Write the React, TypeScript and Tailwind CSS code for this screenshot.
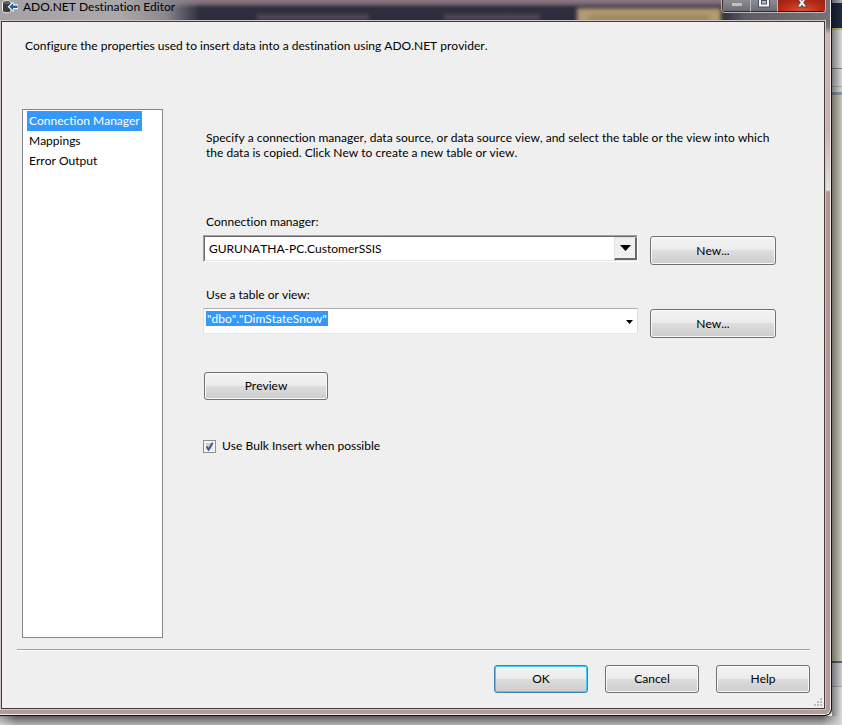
import { useState } from "react";
import type { ButtonHTMLAttributes } from "react";
import { clsx } from "clsx";

const pages = ["Connection Manager", "Mappings", "Error Output"];

interface DialogButtonProps extends ButtonHTMLAttributes<HTMLButtonElement> {
  isDefault?: boolean;
}

function DialogButton({
  isDefault,
  className,
  children,
  ...props
}: DialogButtonProps) {
  return (
    <button
      type="button"
      className={clsx(
        "shrink-0 rounded-[3px] border bg-[linear-gradient(to_bottom,#f3f3f3_0%,#ebebeb_50%,#dddddd_50%,#cdcdcd_100%)] text-center leading-4",
        isDefault
          ? "border-[#3c7fb1] shadow-[inset_0_0_0_1px_#46d0f5]"
          : "border-[#707070] shadow-[inset_0_0_0_1px_#f9f9f9]",
        className
      )}
      {...props}
    >
      {children}
    </button>
  );
}

function AppIcon() {
  return (
    <svg width="16" height="14" viewBox="0 0 16 14" aria-hidden="true">
      <path
        d="M0.5 3C0.5 1.5 2.3 0.8 4.8 0.8S9 1.5 9 3V10.5C9 12 7.2 12.8 4.8 12.8S0.5 12 0.5 10.5Z"
        fill="#3a3a3a"
        stroke="#f4f4f4"
      />
      <ellipse cx="4.8" cy="2.9" rx="3.4" ry="1.3" fill="#5c5c5c" />
      <path d="M5.5 6.8L11.5 1.5V4.3H16V9.3H11.5V12.2Z" fill="#f7f7f7" />
      <path d="M7.3 6.8L11 3.3V5.6H15.5V8H11V10.3Z" fill="#1464b4" />
    </svg>
  );
}

function WindowControls() {
  return (
    <div className="flex h-[13px] overflow-hidden rounded-b-[4px] border border-t-0 border-[#b9b8bc]">
      <button
        type="button"
        aria-label="Minimize"
        className="flex w-7 justify-center border-b border-l border-[#2c2c30] bg-[linear-gradient(to_bottom,#8d8c92,#6d6c72)] pt-[3px]"
      >
        <svg width="10" height="4" viewBox="0 0 10 4" aria-hidden="true">
          <rect width="10" height="3" fill="#c0bfc4" />
        </svg>
      </button>
      <button
        type="button"
        aria-label="Maximize"
        className="flex w-[27px] justify-center border-b border-l border-b-[#2c2c30] border-l-[#b9b8bc] bg-[linear-gradient(to_bottom,#8d8c92,#6d6c72)]"
      >
        <svg width="12" height="8" viewBox="0 0 12 8" aria-hidden="true">
          <path d="M0 0H12V7.5H0Z" fill="#4a5064" />
          <path d="M1 0H11V6.5H1Z" fill="#f5f5f5" />
          <path d="M3 0H9V4.5H3Z" fill="#4a5064" />
          <path d="M4 1H8V3.5H4Z" fill="#b8b8bc" />
        </svg>
      </button>
      <button
        type="button"
        aria-label="Close"
        className="flex w-12 justify-center border-b border-l border-b-[#3a1510] border-l-[#d9b0a8] bg-[radial-gradient(ellipse_at_bottom,#d8543a_0%,#bb2a14_60%,#8f2418_100%)]"
      >
        <svg width="12" height="8" viewBox="0 0 12 8" aria-hidden="true">
          <path
            d="M2 0H10L8 2.4L11.5 7.5H7L6 6L5 7.5H0.5L4 2.4Z"
            fill="#5a4650"
          />
          <path
            d="M3 0H5L6 1.2L7 0H9L7.2 2.5L10 6.5H7.4L6 4.4L4.6 6.5H2L4.8 2.5Z"
            fill="#f7f7f7"
          />
        </svg>
      </button>
    </div>
  );
}

function TitleBar() {
  return (
    <header className="flex h-5 items-start overflow-hidden bg-[linear-gradient(to_bottom,#8a7780_0px,#7a6a74_3px,#302f3f_8px,#2b2c3c_20px)]">
      <div className="flex h-5 w-[220px] items-start gap-[5px] bg-[linear-gradient(to_right,#a5a2a5_0px,#aaa8ab_120px,#8b8990_165px,transparent_200px)] pl-[2px]">
        <AppIcon />
        <h1 className="leading-[14px]">ADO.NET Destination Editor</h1>
      </div>
      {/* editor tabs showing through the glass */}
      <div className="flex flex-1 justify-around pt-[15px]">
        <div className="h-1 w-28 bg-[#5d5361] blur-[2px]" />
        <div className="h-1 w-24 bg-[#5d5361] blur-[2px]" />
      </div>
      <div className="mt-2 h-4 w-[144px] bg-[#b39a70] px-3 pt-2 blur-[2px]">
        <div className="h-1 w-full bg-[#957f5c]" />
      </div>
      <div className="flex h-5 bg-[linear-gradient(to_right,transparent,#5d5c64_24px,#74737a)] pr-1">
        <WindowControls />
      </div>
    </header>
  );
}

function PageList() {
  const [selected, setSelected] = useState(pages[0]);

  return (
    <nav className="w-[141px] shrink-0 border border-[#828790] bg-white py-px pl-1">
      <ul>
        {pages.map((page) => (
          <li key={page} className="flex h-5">
            <button
              type="button"
              onClick={() => setSelected(page)}
              className={clsx(
                "px-[2px] leading-5 whitespace-nowrap",
                page === selected && "bg-[#3399ff] text-white"
              )}
            >
              {page}
            </button>
          </li>
        ))}
      </ul>
    </nav>
  );
}

function ConnectionSelect() {
  return (
    <div className="relative flex-1 border border-t-[#a0a0a0] border-r-white border-b-white border-l-[#a0a0a0]">
      <select
        id="connection"
        className="block h-[25px] w-full appearance-none border border-t-[#696969] border-r-[#e3e3e3] border-b-[#e3e3e3] border-l-[#696969] bg-white pl-1"
      >
        <option>GURUNATHA-PC.CustomerSSIS</option>
      </select>
      <span className="pointer-events-none absolute inset-y-px right-0 flex w-[23px] items-center justify-center border-t border-r-2 border-b-2 border-l border-t-[#e3e3e3] border-r-[#696969] border-b-[#696969] border-l-[#e3e3e3] bg-[#f0f0f0]">
        <svg width="11" height="6" viewBox="0 0 11 6" aria-hidden="true">
          <path d="M0 0H11L5.5 6Z" fill="#000" />
        </svg>
      </span>
    </div>
  );
}

function TableCombo() {
  const [table, setTable] = useState('"dbo"."DimStateSnow"');

  return (
    <div className="flex h-[26px] flex-1 items-start justify-between border border-t-[#abadb3] border-r-[#dbdfe6] border-b-[#e3e9ef] border-l-[#e2e3ea] bg-white pt-[2px] pl-[2px]">
      <input
        id="table"
        type="text"
        value={table}
        onChange={(e) => setTable(e.target.value)}
        className="field-sizing-content h-[15px] bg-[#3399ff] px-px leading-[15px] text-white outline-none"
      />
      <button
        type="button"
        aria-label="Show tables"
        className="flex h-[21px] w-4 items-center justify-center"
      >
        <svg width="7" height="4" viewBox="0 0 7 4" aria-hidden="true">
          <path d="M0 0H7L3.5 4Z" fill="#000" />
        </svg>
      </button>
    </div>
  );
}

function BulkInsertOption() {
  const [checked, setChecked] = useState(true);

  return (
    <label className="mt-[38px] flex items-center gap-[6px] leading-4">
      <span className="relative flex">
        <input
          type="checkbox"
          checked={checked}
          onChange={(e) => setChecked(e.target.checked)}
          className="size-[13px] appearance-none border border-[#8e8f8f] bg-[linear-gradient(135deg,#b8bfc9,#eef0f2)] shadow-[inset_0_0_0_2px_#f4f4f4]"
        />
        {checked && (
          <svg
            className="pointer-events-none absolute inset-0"
            width="13"
            height="13"
            viewBox="0 0 13 13"
            aria-hidden="true"
          >
            <path
              d="M3.5 6.5L5.6 9.6L9.6 2.8"
              fill="none"
              stroke="#41549a"
              strokeWidth="1.9"
            />
          </svg>
        )}
      </span>
      Use Bulk Insert when possible
    </label>
  );
}

function ConnectionPage() {
  return (
    <section className="ml-10 flex-1 pt-[21px] pr-12">
      <p className="pl-[3px] leading-[15px]">
        Specify a connection manager, data source, or data source view, and
        select the table or the view into which the data is copied. Click New to
        create a new table or view.
      </p>

      <label
        htmlFor="connection"
        className="mt-[54px] block pl-[3px] leading-4"
      >
        Connection manager:
      </label>
      <div className="mt-[5px] flex items-start gap-3">
        <ConnectionSelect />
        <DialogButton className="mt-px h-[29px] w-[126px]">New...</DialogButton>
      </div>

      <label htmlFor="table" className="mt-[22px] block pl-[3px] leading-4">
        Use a table or view:
      </label>
      <div className="mt-[5px] flex items-start gap-3">
        <TableCombo />
        <DialogButton className="mt-px h-[29px] w-[126px]">New...</DialogButton>
      </div>

      <DialogButton className="mt-[34px] ml-px h-7 w-[124px]">
        Preview
      </DialogButton>
      <BulkInsertOption />
    </section>
  );
}

function ResizeGrip() {
  return (
    <svg
      className="absolute right-px bottom-px"
      width="10"
      height="10"
      viewBox="0 0 10 10"
      fill="#bcbcbc"
      aria-hidden="true"
    >
      <path d="M7 1h2v2h-2zM4 4h2v2h-2zM7 4h2v2h-2zM1 7h2v2h-2zM4 7h2v2h-2zM7 7h2v2h-2z" />
    </svg>
  );
}

function EditorDialog() {
  return (
    <div className="flex flex-1 overflow-hidden rounded-br-[7px] border-r border-b border-[#141414] bg-[#141414]">
      <div className="flex flex-1 flex-col rounded-br-[6px] border-r border-b border-[#f1eceb] bg-[linear-gradient(to_bottom,#6b6a70_20px,#77757a_27px,#c9b8b3_34px,#c6b2ab_130px,#e6dedb_190px,#b0958c_192px,#b39c95_100%)]">
        <TitleBar />
        <div className="mr-1 mb-1 flex flex-1 border border-[#d3c7c5]">
          <div className="relative flex flex-1 flex-col border border-[#40383b] bg-[#efefef]">
            <p className="pt-4 pl-[23px] leading-4">
              Configure the properties used to insert data into a destination
              using ADO.NET provider.
            </p>

            <main className="mt-[55px] flex flex-1 pl-5">
              <PageList />
              <ConnectionPage />
            </main>

            <footer className="mt-[11px] mr-[14px] mb-[15px] ml-[15px] flex justify-end gap-[17px] border-t border-[#a0a0a0] pt-[15px] shadow-[inset_0_1px_0_#ffffff]">
              <DialogButton isDefault className="h-7 w-[94px]">
                OK
              </DialogButton>
              <DialogButton className="h-7 w-[94px]">Cancel</DialogButton>
              <DialogButton className="h-7 w-[94px]">Help</DialogButton>
            </footer>
            <ResizeGrip />
          </div>
        </div>
      </div>
    </div>
  );
}

export default function App() {
  return (
    <div className="flex min-h-screen flex-col bg-[linear-gradient(to_bottom,#b0b4c0_0px,#b0b4c0_3px,#202c48_3px,#202c48_28px,#d6cc78_28px,#d6cc78_30px,#e4e4e4_30px,#e4e4e4_68px,#8c8c8c_68px,#8c8c8c_69px,#e0e0e0_69px,#e0e0e0_86px,#b4bab8_86px,#b4bab8_87px,#e0e0e0_87px,#e0e0e0_92px,#9ba1ae_92px,#9ba1ae_95px,#d2d0c3_95px,#d2d0c3_661px,#66666c_661px,#66666c_663px,#d8d8dc_663px,#d8d8dc_686px,#b4b4b8_686px,#b4b4b8_687px,#e6e6e6_687px)] font-['Lato',sans-serif] text-[12px] text-black [font-kerning:none] [font-variant-ligatures:none]">
      <div className="flex flex-1">
        <EditorDialog />
        <div className="w-[10px] bg-[linear-gradient(to_right,rgba(0,0,0,0.45),rgba(0,0,0,0.04))]" />
      </div>
      <div className="h-[9px] bg-[linear-gradient(to_right,rgba(255,255,255,0.4),transparent_16px,transparent_calc(100%-20px),#d8d8d8),linear-gradient(to_bottom,#5c5c5c,#b4b4b4)]" />
    </div>
  );
}
